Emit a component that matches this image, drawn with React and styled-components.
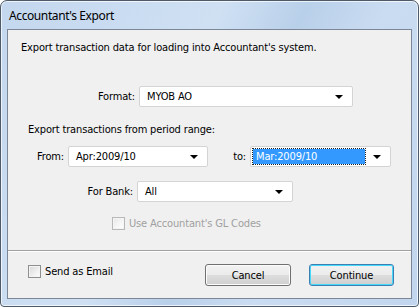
import React from 'react';
import styled, { createGlobalStyle, css } from 'styled-components';

const GlobalStyle = createGlobalStyle`
  html, body {
    margin: 0;
    padding: 0;
    background: #ffffff;
  }
  body {
    font-family: 'DejaVu Sans Condensed', 'Liberation Sans', sans-serif;
    font-size: 11px;
    letter-spacing: -0.15px;
    color: #000;
  }
`;

const Window = styled.div`
  width: 419px;
  height: 307px;
  box-sizing: border-box;
  display: flex;
  flex-direction: column;
  border: 1px solid #4e5a68;
  border-radius: 7px 7px 4px 4px;
  background: linear-gradient(115deg, #c3d7ee 0%, #cfe0f3 40%, #b9d0ea 55%, #cadcf1 70%, #c1d6ee 100%);
  box-shadow: inset 0 0 0 1px rgba(255, 255, 255, 0.7);
  padding: 0 6px 7px 6px;
`;

const TitleBar = styled.div`
  height: 28px;
  display: flex;
  align-items: center;
  padding-left: 2px;
  font-family: 'Noto Sans', sans-serif;
  font-size: 12px;
  letter-spacing: -0.4px;
  color: #000;
`;

const Client = styled.div`
  flex: 1;
  display: flex;
  flex-direction: column;
  background: #f0f0f0;
  border: 1px solid #7b8796;
`;

const Body = styled.div`
  flex: 1;
  display: flex;
  flex-direction: column;
`;

const Text = styled.div`
  line-height: 15px;
  height: 15px;
  margin-top: ${(p) => p.$top}px;
  padding-left: ${(p) => p.$indent}px;
  color: ${(p) => (p.$disabled ? '#a0a0a0' : '#000')};
`;

const Row = styled.div`
  display: flex;
  align-items: center;
  margin-top: ${(p) => p.$top}px;
  padding-left: ${(p) => p.$indent || 0}px;
`;

const Label = styled.label`
  width: ${(p) => p.$w}px;
  text-align: right;
  margin-right: 4px;
  white-space: nowrap;
`;

const Combo = styled.div`
  width: ${(p) => p.$w}px;
  height: 21px;
  box-sizing: border-box;
  display: flex;
  align-items: center;
  background: #fff;
  border: 1px solid #d4d4d4;
  border-radius: 2px;
  padding: 0 3px 0 2px;
`;

const ComboValue = styled.span`
  flex: 1;
  height: 15px;
  line-height: 15px;
  padding-left: 5px;
  white-space: nowrap;
  ${(p) =>
    p.$selected &&
    css`
      background: #3399ff;
      color: #fff;
      outline: 1px dotted #222;
      outline-offset: 0;
      margin-right: 4px;
      padding-left: 3px;
    `}
`;

const Arrow = styled.span`
  width: 0;
  height: 0;
  border-left: 4px solid transparent;
  border-right: 4px solid transparent;
  border-top: 4px solid #000;
  margin: 1px 6px 0 4px;
`;

const CheckRow = styled.div`
  display: flex;
  align-items: center;
  gap: 4px;
  margin-top: ${(p) => p.$top || 0}px;
  padding-left: ${(p) => p.$indent || 0}px;
  color: ${(p) => (p.$disabled ? '#a0a0a0' : '#000')};
`;

const Box = styled.span`
  width: 13px;
  height: 13px;
  box-sizing: border-box;
  border: 1px solid ${(p) => (p.$disabled ? '#b8b8b8' : '#8e8f8f')};
  background: ${(p) =>
    p.$disabled
      ? 'linear-gradient(135deg, #e6e6e6 0%, #f7f7f7 60%, #ffffff 100%)'
      : 'linear-gradient(135deg, #d8d8d8 0%, #eeeeee 55%, #ffffff 100%)'};
  box-shadow: inset 0 0 0 1px #f4f4f4;
`;

const Footer = styled.div`
  height: 48px;
  box-sizing: border-box;
  border-top: 1px solid #a0a0a0;
  box-shadow: inset 0 1px 0 #ffffff;
  display: flex;
  align-items: flex-start;
  padding: 13px 17px 0 20px;
`;

const Buttons = styled.div`
  margin-left: auto;
  display: flex;
  gap: 18px;
`;

const Button = styled.button`
  width: ${(p) => p.$w}px;
  height: 22px;
  box-sizing: border-box;
  font-family: inherit;
  font-size: 11px;
  letter-spacing: -0.15px;
  color: #000;
  border: 1px solid ${(p) => (p.$default ? '#3c7fb1' : '#707070')};
  border-radius: 3px;
  background: linear-gradient(#f2f2f2 0%, #ebebeb 50%, #dddddd 51%, #cfcfcf 100%);
  box-shadow: inset 0 0 0 1px ${(p) => (p.$default ? '#48d8fb' : '#fcfcfc')};
  padding: 0;
`;

export default function App() {
  return (
    <>
      <GlobalStyle />
      <Window>
        <TitleBar>Accountant's Export</TitleBar>
        <Client>
          <Body>
            <Text $top={10} $indent={13}>
              Export transaction data for loading into Accountant's system.
            </Text>
            <Row $top={31}>
              <Label $w={127}>Format:</Label>
              <Combo $w={214}>
                <ComboValue>MYOB AO</ComboValue>
                <Arrow />
              </Combo>
            </Row>
            <Text $top={15} $indent={20}>
              Export transactions from period range:
            </Text>
            <Row $top={9}>
              <Label $w={56}>From:</Label>
              <Combo $w={140}>
                <ComboValue>Apr:2009/10</ComboValue>
                <Arrow />
              </Combo>
              <Label $w={38}>to:</Label>
              <Combo $w={141}>
                <ComboValue $selected>Mar:2009/10</ComboValue>
                <Arrow />
              </Combo>
            </Row>
            <Row $top={14}>
              <Label $w={125}>For Bank:</Label>
              <Combo $w={156}>
                <ComboValue>All</ComboValue>
                <Arrow />
              </Combo>
            </Row>
            <CheckRow $top={15} $indent={104} $disabled>
              <Box $disabled />
              Use Accountant's GL Codes
            </CheckRow>
          </Body>
          <Footer>
            <CheckRow $top={1}>
              <Box />
              Send as Email
            </CheckRow>
            <Buttons>
              <Button $w={86}>Cancel</Button>
              <Button $w={85} $default>
                Continue
              </Button>
            </Buttons>
          </Footer>
        </Client>
      </Window>
    </>
  );
}
